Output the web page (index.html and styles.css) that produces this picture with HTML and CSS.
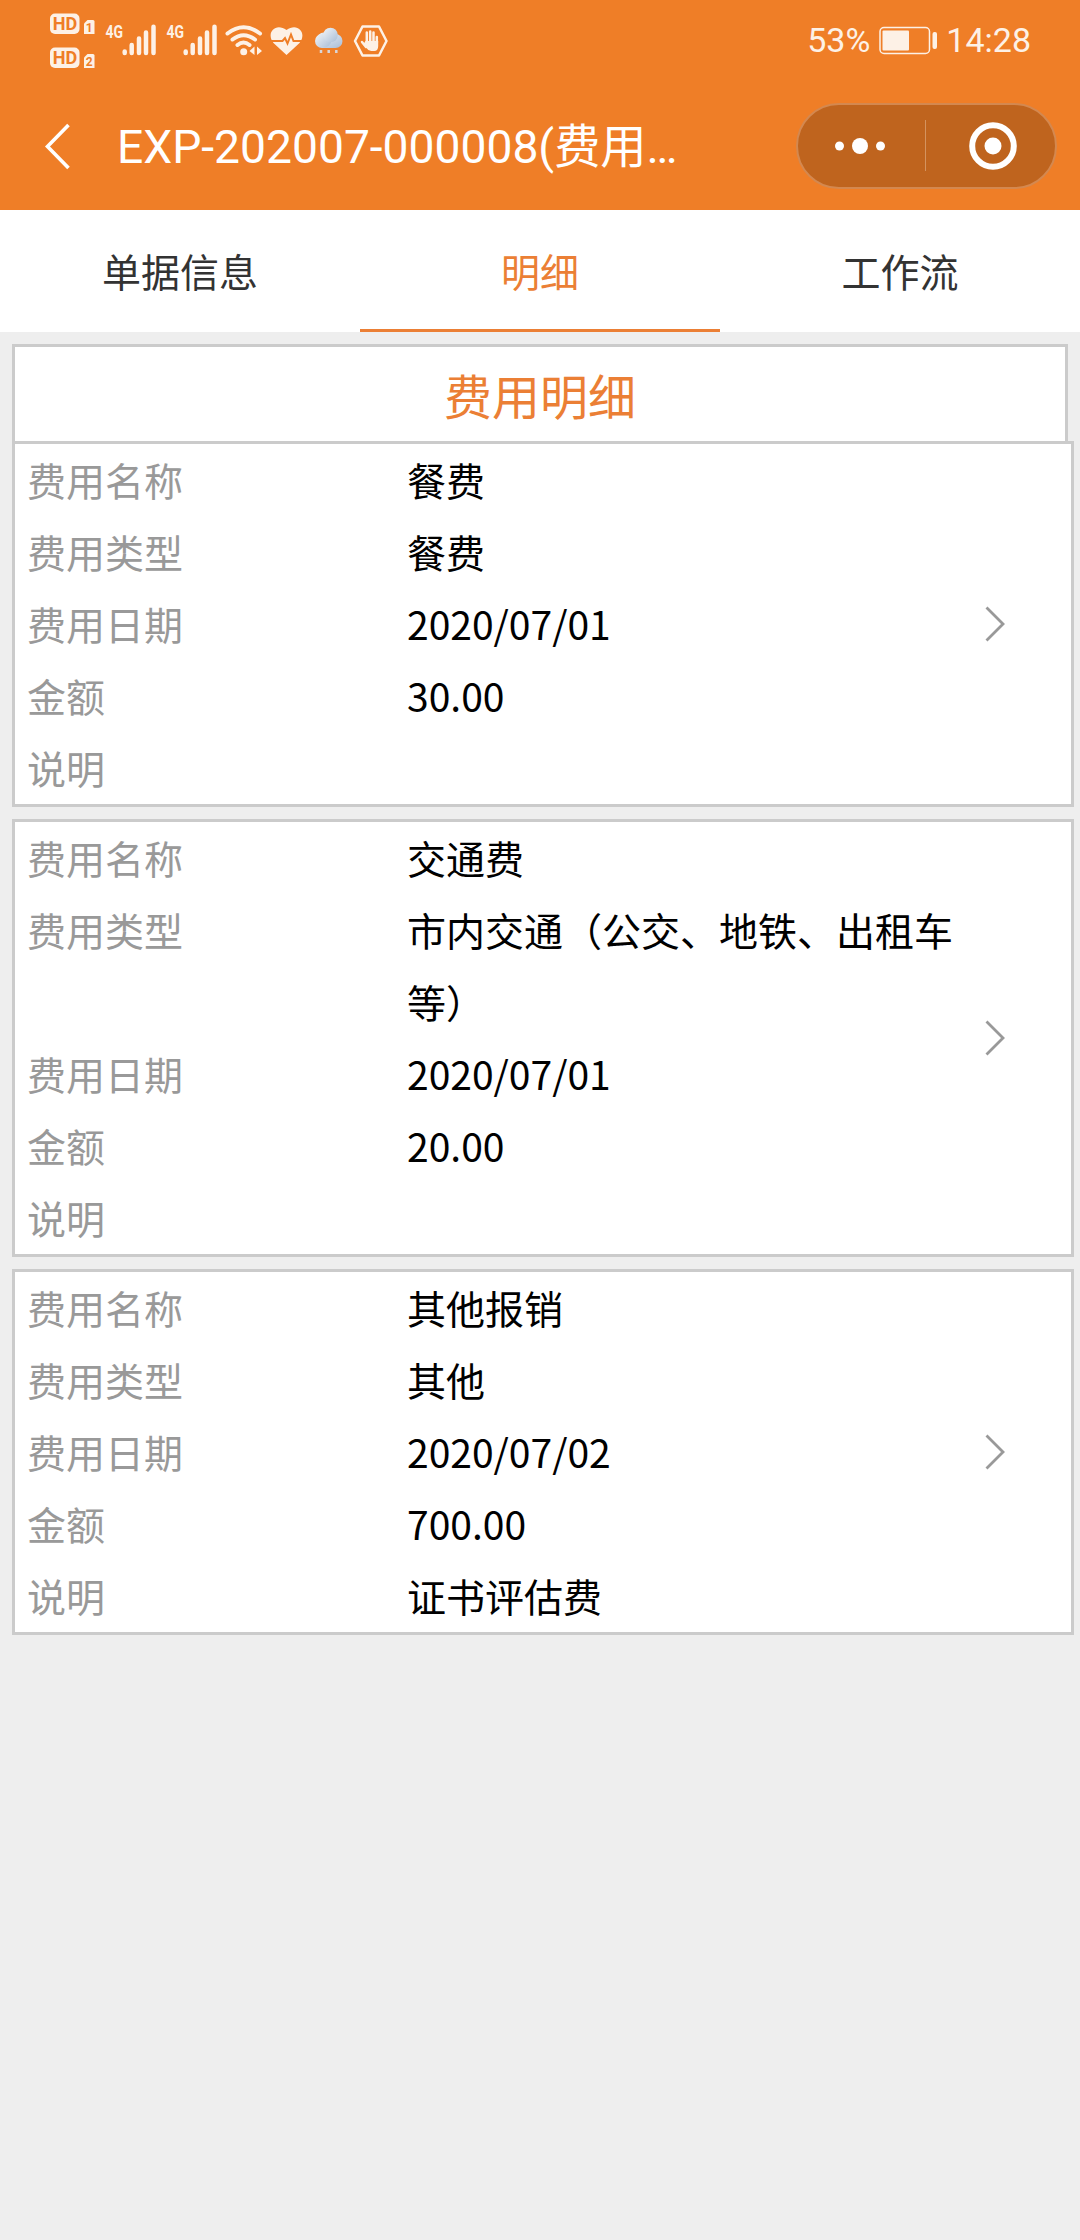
FILE: index.html
```
<!DOCTYPE html>
<html lang="zh-CN">
<head>
  <meta charset="UTF-8" />
  <meta name="viewport" content="width=device-width, initial-scale=1.0" />
  <title>费用明细</title>
  <link rel="stylesheet" href="styles.css">
</head>
<body>
  <header class="header">
    <div class="status-bar">
      <div class="status-icons">
        <!-- HD 1 / HD 2 -->
        <svg width="46" height="80" viewBox="50 0 46 80">
          <g id="hd">
            <rect x="50" y="13.5" width="29.5" height="20.5" rx="5" />
            <text class="hd-text" x="52.8" y="30.3" textLength="24.5" lengthAdjust="spacingAndGlyphs">HD</text>
            <path d="M87.500 20h5.500q1.500 0 1.500 1.500v12.500h-10.500v-10.500z" />
          </g>
          <text class="sim-text" x="89.300" y="32.300">1</text>
          <use href="#hd" y="34" />
          <text class="sim-text" x="89.300" y="66.300">2</text>
        </svg>
        <!-- Signal -->
        <svg class="signal" width="51" height="80" viewBox="105 0 51 80">
          <g id="signal">
            <text class="net-text" x="105.500" y="38.300" textLength="17.500" lengthAdjust="spacingAndGlyphs">4G</text>
            <path class="bars" d="M124.700 51.500v1.500M131.700 45v8M139 38.500v14.500M146 32.500v20.500M153.500 26.700v26.300" />
          </g>
        </svg>
        <svg class="signal" width="51" height="80" viewBox="105 0 51 80">
          <use href="#signal" />
        </svg>
        <!-- Wifi -->
        <svg class="wifi" width="39" height="80" viewBox="225 0 39 80">
          <path class="arc" d="M227.500 33.500Q243.500 21 260 33.500M232.500 39.500Q243.500 31 255 39.500M237.500 45Q243.500 40 249.500 45" />
          <circle cx="243.700" cy="51.700" r="3.500" />
          <path d="M254.500 46.500v8.500l-5-4zM257 46.500v8.500l5-4z" />
        </svg>
        <!-- Health -->
        <svg class="health" width="33" height="80" viewBox="270.500 0 33 80">
          <path d="M287 55L274 43C266 33 276 22 287 30C298 22 308 33 300 43z" />
          <path class="pulse" d="M271 41h12l2.500-3 2.500 5.500 3.500-9 2.500 6.500h9" />
        </svg>
        <!-- Weather -->
        <svg class="weather" width="28" height="80" viewBox="315 0 28 80">
          <defs>
            <linearGradient id="cloudFill" x1="0" y1="0" x2="1" y2="1">
              <stop offset="0" stop-color="#f1f4f8" />
              <stop offset="1" stop-color="#a9bdd6" />
            </linearGradient>
          </defs>
          <rect x="315" y="34" width="27.500" height="14" rx="7" fill="url(#cloudFill)" />
          <circle cx="324" cy="40" r="7.500" fill="url(#cloudFill)" />
          <circle cx="330.500" cy="35" r="7.300" fill="url(#cloudFill)" />
          <path class="rain" d="M321 50v3M328.700 50v3M336.300 50v3" />
        </svg>
        <!-- Do not disturb hand -->
        <svg class="hand" width="36" height="80" viewBox="353.500 0 36 80">
          <path class="hex" d="M363 26.500h16.500l7.500 14.500-7.500 14.500h-16.500l-7.500-14.500z" />
          <path class="fingers" d="M367.300 43v-10.500M370.700 42v-10.500M374 42v-9.500M377.300 43v-6M362.500 42l4 5" />
          <path d="M366 41h12.700v5q0 5-4 5h-3q-3 0-4.700-3l-3-4z" />
        </svg>
      </div>
      <div class="status-right">
        <span>53%</span>
        <svg class="battery" width="60" height="29" viewBox="878 26 60 29">
          <rect class="shell" x="880" y="27.500" width="49.500" height="26" rx="4" />
          <rect x="882.500" y="30.500" width="26.500" height="20" rx="1" />
          <rect x="932.500" y="32" width="4.500" height="17" rx="2" />
        </svg>
        <span>14:28</span>
      </div>
    </div>

    <div class="nav-bar">
      <svg class="back" width="30" height="50" viewBox="42 120 30 50">
        <path d="M68.500 124L47.500 145.500L68.500 167" />
      </svg>
      <h1 class="nav-title">EXP-202007-000008(费用…</h1>
      <div class="capsule">
        <svg class="more" width="50" height="20" viewBox="0 0 50 20">
          <circle cx="4.500" cy="10" r="4.500" />
          <circle cx="25" cy="10" r="8" />
          <circle cx="45.500" cy="10" r="4.500" />
        </svg>
        <span class="divider"></span>
        <svg class="close" width="48" height="48" viewBox="0 0 48 48">
          <circle class="ring" cx="24" cy="24" r="20.800" />
          <circle cx="24" cy="24" r="8.500" />
        </svg>
      </div>
    </div>
  </header>

  <nav class="tabs">
    <div class="tab">单据信息</div>
    <div class="tab active">明细</div>
    <div class="tab">工作流</div>
  </nav>

  <main class="content">
    <h2 class="section-title">费用明细</h2>

    <div class="item">
      <dl class="fields">
        <dt>费用名称</dt><dd>餐费</dd>
        <dt>费用类型</dt><dd>餐费</dd>
        <dt>费用日期</dt><dd>2020/07/01</dd>
        <dt>金额</dt><dd>30.00</dd>
        <dt>说明</dt><dd></dd>
      </dl>
      <svg class="arrow" width="24" height="40" viewBox="0 0 24 40"><path d="M3.500 3.500L20 20L3.500 36.500" /></svg>
    </div>

    <div class="item">
      <dl class="fields">
        <dt>费用名称</dt><dd>交通费</dd>
        <dt>费用类型</dt><dd>市内交通（公交、地铁、出租车等）</dd>
        <dt>费用日期</dt><dd>2020/07/01</dd>
        <dt>金额</dt><dd>20.00</dd>
        <dt>说明</dt><dd></dd>
      </dl>
      <svg class="arrow" width="24" height="40" viewBox="0 0 24 40"><path d="M3.500 3.500L20 20L3.500 36.500" /></svg>
    </div>

    <div class="item">
      <dl class="fields">
        <dt>费用名称</dt><dd>其他报销</dd>
        <dt>费用类型</dt><dd>其他</dd>
        <dt>费用日期</dt><dd>2020/07/02</dd>
        <dt>金额</dt><dd>700.00</dd>
        <dt>说明</dt><dd>证书评估费</dd>
      </dl>
      <svg class="arrow" width="24" height="40" viewBox="0 0 24 40"><path d="M3.500 3.500L20 20L3.500 36.500" /></svg>
    </div>
  </main>
</body>
</html>
```
FILE: styles.css
```
:root {
  --header-bg: #ef7e27;
  --primary-color: #eb7f35;
  --status-color: #fdf1e6;
  --border-color: #cbcbcb;
  --bg-color: #eeeeee;
  --label-color: #999;
}

* {
  margin: 0;
  padding: 0;
  box-sizing: border-box;
}

body {
  min-height: 2240px;
  font-family: "Noto Sans CJK SC", sans-serif;
  font-size: 39px;
  background-color: var(--bg-color);
  color: #000;
}

svg {
  display: block;
  flex: none;
}

/* Header */
.header {
  height: 210px;
  background-color: var(--header-bg);
  color: white;
}

.status-bar {
  display: flex;
  justify-content: space-between;
  height: 80px;
  padding: 0 49px 0 50px;
  color: var(--status-color);
  fill: var(--status-color);
}

.status-icons {
  display: flex;
}

.status-right {
  display: flex;
  align-items: center;
  gap: 8px;
  font-family: Roboto, sans-serif;
  font-size: 34px;
  line-height: 82px;
}

.hd-text,
.sim-text {
  font-family: Roboto, sans-serif;
  font-weight: bold;
  fill: var(--header-bg);
}

.hd-text {
  font-size: 19px;
}

.sim-text {
  font-size: 12px;
  text-anchor: middle;
}

.net-text {
  font-family: Roboto, sans-serif;
  font-size: 18px;
  font-weight: bold;
}

.bars {
  stroke: var(--status-color);
  stroke-width: 4.5;
  stroke-linecap: round;
}

.signal {
  margin-left: 9px;
}

.signal + .signal {
  margin-left: 10px;
}

.wifi {
  margin-left: 8px;
}

.arc {
  fill: none;
  stroke: var(--status-color);
  stroke-width: 4;
  stroke-linecap: round;
}

.health {
  margin-left: 6px;
}

.pulse {
  fill: none;
  stroke: var(--header-bg);
  stroke-width: 2;
}

.weather {
  margin-left: 12px;
}

.rain {
  stroke: #d9d6d8;
  stroke-width: 2.5;
}

.hand {
  margin-left: 10px;
}

.hex {
  fill: none;
  stroke: var(--status-color);
  stroke-width: 2.5;
  stroke-linejoin: round;
}

.fingers {
  stroke: var(--status-color);
  stroke-width: 2.5;
  stroke-linecap: round;
}

.battery .shell {
  fill: none;
  stroke: var(--status-color);
  stroke-width: 1.5;
}

.nav-bar {
  display: flex;
  align-items: center;
  height: 131px;
  padding: 0 23px 0 42px;
}

.back path {
  fill: none;
  stroke: white;
  stroke-width: 3.6;
}

.nav-title {
  flex: 1;
  margin-left: 45px;
  padding-top: 3px;
  font-family: Roboto, "Noto Sans CJK SC", sans-serif;
  font-size: 46.2px;
  font-weight: normal;
  line-height: 70px;
  white-space: nowrap;
}

.capsule {
  display: flex;
  align-items: center;
  width: 261px;
  height: 86px;
  padding: 0 37px;
  border: 2px solid #d4884f;
  border-radius: 43px;
  background-color: #bf641e;
  fill: white;
}

.divider {
  width: 1px;
  height: 51px;
  margin: 0 43px 0 40px;
  background-color: #d4935f;
}

.ring {
  fill: none;
  stroke: white;
  stroke-width: 6;
}

/* Tabs */
.tabs {
  display: flex;
  height: 122px;
  background-color: white;
}

.tab {
  flex: 1;
  border-bottom: 3px solid transparent;
  color: #333;
  line-height: 120px;
  text-align: center;
}

.tab.active {
  border-color: var(--primary-color);
  color: var(--primary-color);
}

/* Expense list */
.content {
  padding: 12px 6px 0 12px;
}

.section-title {
  height: 97px;
  margin-right: 6px;
  border: 3px solid var(--border-color);
  border-bottom: none;
  background-color: white;
  color: var(--primary-color);
  font-size: 48px;
  font-weight: normal;
  line-height: 94px;
  text-align: center;
}

.item {
  display: flex;
  align-items: center;
  height: auto;
  margin-bottom: 12px;
  padding-left: 12px;
  border: 3px solid var(--border-color);
  background-color: white;
}

.fields {
  display: grid;
  grid-template-columns: 380px 570px;
  grid-auto-rows: minmax(72px, auto);
  margin: -1px 0 1px;
  line-height: 72px;
}

.fields dt {
  color: var(--label-color);
}

.arrow {
  margin-left: 6px;
}

.arrow path {
  fill: none;
  stroke: var(--label-color);
  stroke-width: 2.8;
}
```
